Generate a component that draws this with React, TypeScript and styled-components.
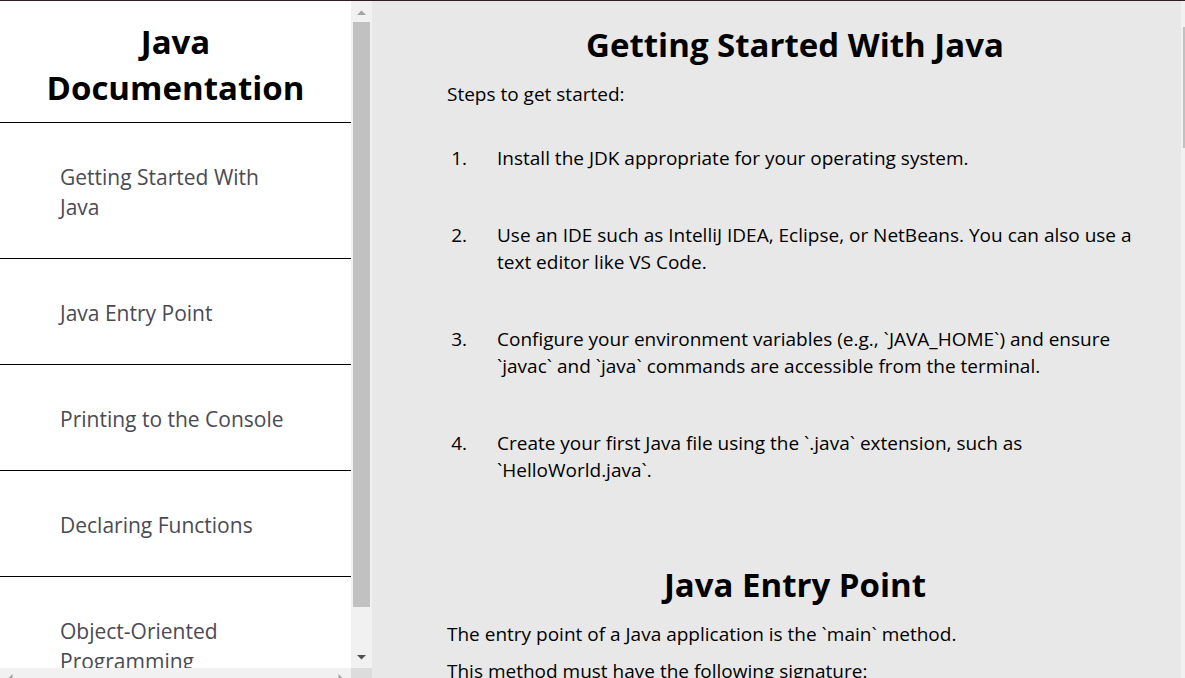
import React from "react";
import styled, { createGlobalStyle } from "styled-components";

const GlobalStyle = createGlobalStyle`
  html, body {
    margin: 0;
    padding: 0;
    height: 100%;
    overflow: hidden;
  }
  body {
    font-family: "Open Sans", "Noto Sans", "Liberation Sans", sans-serif;
    color: #000;
    background: #e8e8e8;
  }
  *, *::before, *::after { box-sizing: border-box; }
`;

/* ---------- scrollbar drawing ---------- */

const Track = styled.div<{ $vertical: boolean }>`
  display: flex;
  flex-direction: ${(p) => (p.$vertical ? "column" : "row")};
  background: #f1f1f1;
  ${(p) => (p.$vertical ? "width: 21px; height: 100%;" : "height: 21px; width: 100%;")}
  overflow: hidden;
`;

const ArrowBox = styled.div`
  flex: 0 0 21px;
  width: 21px;
  height: 21px;
  display: flex;
  align-items: center;
  justify-content: center;
`;

const Thumb = styled.div<{ $vertical: boolean }>`
  flex: none;
  background: #c1c1c1;
  ${(p) => (p.$vertical ? "margin: 0 2px;" : "margin: 2px 0;")}
`;

const Spacer = styled.div`
  flex: 1 1 auto;
`;

type Dir = "up" | "down" | "left" | "right";
const arrowPoints: Record<Dir, string> = {
  up: "6,14 10.5,9.5 15,14",
  down: "6,8 15,8 10.5,12.5",
  left: "12.5,6 12.5,15 8,10.5",
  right: "8.5,6 8.5,15 13,10.5",
};

function Arrow({ dir, color }: { dir: Dir; color: string }) {
  return (
    <ArrowBox>
      <svg width="21" height="21" viewBox="0 0 21 21">
        <polygon points={arrowPoints[dir]} fill={color} />
      </svg>
    </ArrowBox>
  );
}

function ScrollBar({
  vertical,
  offset,
  size,
}: {
  vertical: boolean;
  offset: number;
  size: number;
}) {
  const thumbStyle = vertical
    ? { height: size, marginTop: offset }
    : { width: size, marginLeft: offset };
  return (
    <Track $vertical={vertical}>
      <Arrow dir={vertical ? "up" : "left"} color="#a3a3a3" />
      {size > 0 && <Thumb $vertical={vertical} style={thumbStyle} />}
      <Spacer />
      <Arrow dir={vertical ? "down" : "right"} color={vertical ? "#505050" : "#a3a3a3"} />
    </Track>
  );
}

/* ---------- layout ---------- */

const Page = styled.div`
  display: flex;
  align-items: flex-start;
  width: 1202px;
  height: 100vh;
  border-top: 1px solid #2e1d25;
`;

const Nav = styled.nav`
  flex: 0 0 372px;
  height: 688px;
  display: grid;
  grid-template-columns: 351px 21px;
  grid-template-rows: 667px 21px;
  background: #fff;
`;

const NavViewport = styled.div`
  overflow: hidden;
`;

const Corner = styled.div`
  background: #dcdcdc;
`;

const NavHeader = styled.header`
  padding: 18px 20px 11px;
  border-bottom: 1px solid #000;
`;

const NavTitle = styled.h1`
  margin: 0;
  font-size: 33px;
  line-height: 46px;
  font-weight: 700;
  text-align: center;
`;

const NavList = styled.ul`
  list-style: none;
  margin: 0;
  padding: 0;
`;

const NavItem = styled.li`
  border-bottom: 1px solid #000;
`;

const NavLink = styled.a`
  display: block;
  padding: 39px 60px 36px;
  font-size: 21px;
  line-height: 30px;
  color: #4a4a55;
  text-decoration: none;
`;

const Main = styled.main`
  flex: 0 0 830px;
  height: calc(100vh - 1px);
  display: flex;
  background: #e8e8e8;
`;

const MainViewport = styled.div`
  flex: 0 0 809px;
  overflow: hidden;
`;

const Section = styled.section`
  width: 771px;
  padding: 23px 0 0 75px;
`;

const Heading = styled.h2`
  margin: 0 0 16px;
  font-size: 33px;
  line-height: 41px;
  font-weight: 700;
  text-align: center;
`;

const Text = styled.p`
  margin: 0 0 10px;
  font-size: 19px;
  line-height: 27px;
`;

const Steps = styled.ol`
  margin: 37px 0 57px;
  padding-left: 25px;
`;

const Step = styled.li`
  padding-left: 25px;
  margin-bottom: 50px;
  font-size: 19px;
  line-height: 27px;
`;

const Code = styled.pre`
  margin: 10px 0 24px;
  padding: 16px 20px;
  background: #f7f7f7;
  border-radius: 4px;
  font-family: "Liberation Mono", "DejaVu Sans Mono", monospace;
  font-size: 15px;
  line-height: 22px;
  white-space: pre-wrap;
`;

const navItems = [
  "Getting Started With Java",
  "Java Entry Point",
  "Printing to the Console",
  "Declaring Functions",
  "Object-Oriented Programming",
];

const slug = (s: string) => s.replace(/\s+/g, "_");

export default function App() {
  return (
    <>
      <GlobalStyle />
      <Page>
        <Nav id="navbar">
          <NavViewport>
            <NavHeader>
              <NavTitle>Java Documentation</NavTitle>
            </NavHeader>
            <NavList>
              {navItems.map((n) => (
                <NavItem key={n}>
                  <NavLink className="nav-link" href={`#${slug(n)}`}>
                    {n}
                  </NavLink>
                </NavItem>
              ))}
            </NavList>
          </NavViewport>
          <ScrollBar vertical offset={0} size={585} />
          <ScrollBar vertical={false} offset={0} size={0} />
          <Corner />
        </Nav>
        <Main id="main-doc">
          <MainViewport>
            <Section className="main-section" id="Getting_Started_With_Java">
              <Heading as="h1">Getting Started With Java</Heading>
              <Text>Steps to get started:</Text>
              <Steps>
                <Step>Install the JDK appropriate for your operating system.</Step>
                <Step>
                  Use an IDE such as IntelliJ IDEA, Eclipse, or NetBeans. You can also use a
                  text editor like VS Code.
                </Step>
                <Step>
                  Configure your environment variables (e.g., `JAVA_HOME`) and ensure `javac`
                  and `java` commands are accessible from the terminal.
                </Step>
                <Step>
                  Create your first Java file using the `.java` extension, such as
                  `HelloWorld.java`.
                </Step>
              </Steps>
            </Section>
            <Section className="main-section" id="Java_Entry_Point">
              <Heading>Java Entry Point</Heading>
              <Text>The entry point of a Java application is the `main` method.</Text>
              <Text>This method must have the following signature:</Text>
              <Code>{`public static void main(String[] args) {
    // code goes here
}`}</Code>
            </Section>
          </MainViewport>
          <ScrollBar vertical offset={5} size={121} />
        </Main>
      </Page>
    </>
  );
}
